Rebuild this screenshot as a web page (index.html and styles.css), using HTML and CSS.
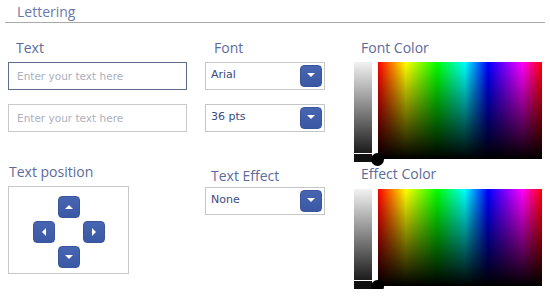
FILE: index.html
```html
<!DOCTYPE html>
<html lang="en">
<head>
    <meta charset="UTF-8">
    <meta name="viewport" content="width=device-width, initial-scale=1.0">
    <title>Lettering</title>
    <link rel="stylesheet" href="styles.css">
</head>

<body>
    <header class="titulo">
        <h2>Lettering</h2>
    </header>

    <section class="colunas">

        <div class="coluna col-texto">
            <p class="rotulo r-texto">Text</p>
            <input class="campo foco" type="text" placeholder="Enter your text here">
            <input class="campo campo2" type="text" placeholder="Enter your text here">

            <p class="rotulo r-posicao">Text position</p>
            <div class="posicao">
                <div class="setas">
                    <button class="seta s-cima"><span class="tri cima"></span></button>
                    <button class="seta s-esq"><span class="tri esq"></span></button>
                    <button class="seta s-dir"><span class="tri dir"></span></button>
                    <button class="seta s-baixo"><span class="tri baixo"></span></button>
                </div>
            </div>
        </div>

        <div class="coluna col-fonte">
            <p class="rotulo r-fonte">Font</p>
            <div class="lista">
                <span>Arial</span>
                <button class="abrir"><span class="tri baixo"></span></button>
            </div>
            <div class="lista lista2">
                <span>36 pts</span>
                <button class="abrir"><span class="tri baixo"></span></button>
            </div>

            <p class="rotulo r-efeito">Text Effect</p>
            <div class="lista">
                <span>None</span>
                <button class="abrir"><span class="tri baixo"></span></button>
            </div>
        </div>

        <div class="coluna col-cor">
            <p class="rotulo r-cor">Font Color</p>
            <div class="seletor">
                <div class="tons">
                    <div class="cinza"></div>
                    <div class="alca"></div>
                </div>
                <div class="espectro"><span class="bolinha"></span></div>
            </div>

            <p class="rotulo r-cor2">Effect Color</p>
            <div class="seletor">
                <div class="tons">
                    <div class="cinza"></div>
                    <div class="alca"></div>
                </div>
                <div class="espectro"><span class="bolinha"></span></div>
            </div>
        </div>

    </section>
</body>
</html>
```

FILE: styles.css
```css
body{
    margin: 0;
    background: white;
    font-family: "Open Sans", Arial, sans-serif;
}

.titulo{
    width: 540px;
    margin-left: 5px;
    border-bottom: 1px solid #a9a9a9;
}

.titulo h2{
    margin: 0;
    padding: 1px 0 0 12px;
    font-size: 14px;
    font-weight: normal;
    line-height: 21px;
    color: #6b7aa8;
}

.colunas{
    display: flex;
    padding: 16px 0 0 8px;
}

.coluna{
    display: flex;
    flex-direction: column;
}

.col-texto{
    width: 179px;
}

.col-fonte{
    width: 120px;
    margin-left: 18px;
}

.col-cor{
    width: 188px;
    margin-left: 29px;
}

.rotulo{
    margin: 0;
    font-size: 14px;
    line-height: 18px;
    color: #5b6b9b;
}

.r-texto{ padding-left: 8px; }
.r-fonte{ padding-left: 9px; }
.r-cor{ padding-left: 7px; }

.r-posicao{
    padding-left: 1px;
    margin-top: 31px;
}

.r-efeito{
    padding-left: 6px;
    margin-top: 35px;
}

.r-cor2{
    padding-left: 7px;
    margin-top: 3px;
}

/* campos de texto */
.campo{
    box-sizing: border-box;
    width: 179px;
    height: 28px;
    margin: 5px 0 0 0;
    padding: 0 0 0 8px;
    border: 1px solid #c9c9c9;
    font-family: "DejaVu Sans", Verdana, sans-serif;
    font-size: 10.5px;
    color: #3a4a7f;
    outline: none;
}

.campo::placeholder{
    color: #acb0bc;
}

.foco{
    border-color: #5d6b8e;
}

.campo2{
    margin-top: 14px;
}

/* listas */
.lista{
    box-sizing: border-box;
    display: flex;
    align-items: center;
    justify-content: space-between;
    width: 120px;
    height: 28px;
    margin-top: 5px;
    padding: 0 2px 0 5px;
    border: 1px solid #c6c6c6;
    font-family: "DejaVu Sans", Verdana, sans-serif;
    font-size: 11px;
    color: #3a4a7f;
}

.lista span{
    margin-top: -3px;
}

.lista2{
    margin-top: 14px;
}

.r-efeito + .lista{
    margin-top: 2px;
}

.abrir,
.seta{
    display: flex;
    align-items: center;
    justify-content: center;
    width: 22px;
    height: 22px;
    padding: 0;
    border: 1px solid #3a559c;
    border-radius: 4px;
    background: linear-gradient(#4865b2, #3b58a5);
}

.tri{
    width: 0;
    height: 0;
    border-style: solid;
    border-color: transparent;
}

.tri.baixo{
    border-width: 4px 4px 0 4px;
    border-top-color: white;
}

.tri.cima{
    border-width: 0 4px 4px 4px;
    border-bottom-color: white;
}

.tri.esq{
    border-width: 4px 4px 4px 0;
    border-right-color: white;
}

.tri.dir{
    border-width: 4px 0 4px 4px;
    border-left-color: white;
}

/* posicao do texto */
.posicao{
    box-sizing: border-box;
    display: flex;
    align-items: center;
    justify-content: center;
    width: 121px;
    height: 88px;
    margin-top: 5px;
    border: 1px solid #c8c8c8;
}

.setas{
    display: grid;
    grid-template-columns: 22px 22px 22px;
    grid-template-rows: 22px 22px 22px;
    gap: 3px 3px;
    margin-top: 3px;
}

.s-cima{ grid-column: 2; grid-row: 1; }
.s-esq{ grid-column: 1; grid-row: 2; }
.s-dir{ grid-column: 3; grid-row: 2; }
.s-baixo{ grid-column: 2; grid-row: 3; }

/* seletores de cor */
.seletor{
    display: flex;
    margin-top: 5px;
}

.r-cor2 + .seletor{
    margin-top: 6px;
}

.tons{
    display: flex;
    flex-direction: column;
    width: 18px;
}

.cinza{
    height: 91px;
    background: linear-gradient(#f2f2f2, #1c1c1c);
}

.alca{
    height: 8px;
    margin-top: 1px;
    background: #111;
}

.espectro{
    position: relative;
    width: 164px;
    height: 97px;
    margin-left: 6px;
    background:
        linear-gradient(rgba(0, 0, 0, 0), #000),
        linear-gradient(to right, #ff0000 0%, #ffff00 17%, #00ff00 36%, #00ffff 53%, #0000ff 67%, #ff00ff 88%, #ff0000 100%);
}

.bolinha{
    position: absolute;
    left: -7px;
    bottom: -7px;
    width: 13px;
    height: 13px;
    border-radius: 50%;
    background: #000;
}
```
